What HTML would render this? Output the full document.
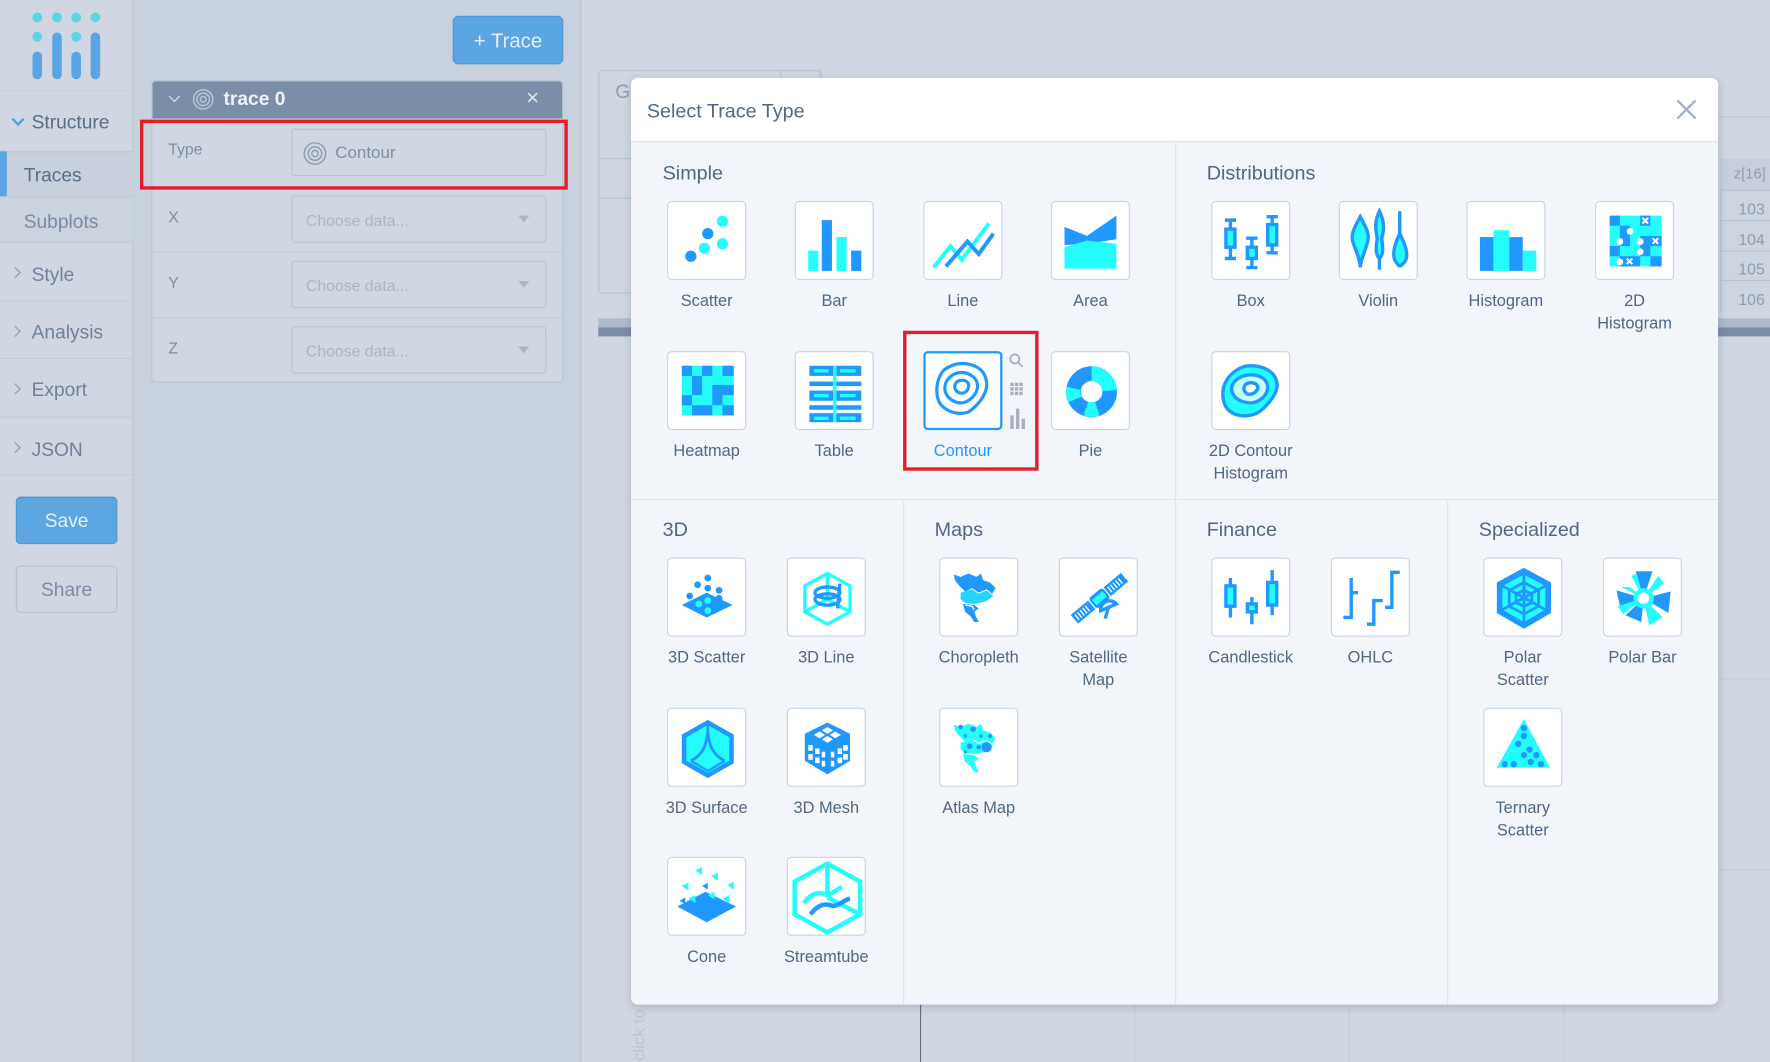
<!DOCTYPE html>
<html><head><meta charset="utf-8">
<style>
*{box-sizing:border-box;margin:0;padding:0}
html,body{width:1770px;height:1062px;overflow:hidden;background:#d0d7e2;font-family:"Liberation Sans",sans-serif}
#w{position:absolute;left:0;top:0;width:1568px;height:941px;transform:scale(1.12883);transform-origin:0 0;background:#d0d7e2}
.a{position:absolute}
.sb{left:0;top:0;width:118px;height:941px;background:#d0d7e2;border-right:1px solid #bcc6d4}
.nav{position:absolute;left:0;width:118px;border-bottom:1px solid #c2cbd8;color:#6f819b;font-size:17px}
.nav span{position:absolute;left:28px}
.chev{position:absolute;left:13px;width:7px;height:7px;border-right:1.5px solid #8a9ab0;border-top:1.5px solid #8a9ab0;transform:rotate(45deg)}
.pc{left:118px;top:0;width:397px;height:941px;background:#c8d1de;border-right:1px solid #b9c4d2}
.lbl{position:absolute;left:149px;font-size:14px;color:#7d8ea6}
.inp{position:absolute;left:258px;width:226px;height:42px;border:1px solid #b7c3d3;border-radius:3px;background:#d0d7e2;font-size:14px;color:#a9b6c8;padding-left:12px;line-height:42px}
.inp .tri{position:absolute;right:14px;top:17px;border-left:5px solid transparent;border-right:5px solid transparent;border-top:6px solid #a9b6c8}
.modal{left:559px;top:69px;width:963px;height:821px;background:#f2f5fa;border-radius:6px;overflow:hidden;box-shadow:0 2px 8px rgba(60,70,90,.25)}
.mh{position:absolute;left:0;top:0;width:963px;height:57px;background:#fff;border-bottom:1px solid #dde4ee}
.sec{position:absolute;font-size:17.5px;color:#506784;margin-top:2px}
.vl{position:absolute;width:1px;background:#e0e6ef}
.hl{position:absolute;height:1px;background:#e0e6ef}
.t{position:absolute;width:70px;height:70px;background:#fff;border:1px solid #c8d4e3;border-radius:4px}
.t svg{position:absolute;left:0;top:0}
.tl{position:absolute;width:130px;margin-left:-30px;margin-top:2px;text-align:center;font-size:14.5px;line-height:20px;color:#506784}
</style></head><body>
<div id="w">
<!-- background plot area -->
<div class="a" style="left:530px;top:62px;width:198px;height:198px;border:1px solid #b9c4d2;border-radius:3px"></div>
<div class="a" style="left:530px;top:140px;width:198px;height:1px;background:#b9c4d2"></div>
<div class="a" style="left:530px;top:175px;width:198px;height:1px;background:#b9c4d2"></div>
<div class="a" style="left:545px;top:72px;font-size:17px;color:#8f9db2">G</div>
<div class="a" style="left:691px;top:62px;width:36px;height:10px;border:1px solid #b9c4d2;border-radius:3px"></div>
<div class="a" style="left:530px;top:282px;width:1038px;height:8px;background:#aebacb"></div>
<div class="a" style="left:530px;top:290px;width:1038px;height:8px;background:#7a8ca6"></div>
<div class="a" style="left:1522px;top:103px;width:46px;height:1px;background:#bcc6d3"></div>
<div class="a" style="left:1524px;top:141px;width:44px;height:135px;border-left:1px solid #b9c4d2;background:#cdd5e0"></div>
<div class="a" style="left:1524px;top:141px;width:44px;height:28px;background:#c6cfdb;border-bottom:1px solid #b9c4d2"></div>
<div class="a" style="left:1536px;top:146px;font-size:13px;color:#8e9cb1">z[16]</div>
<div class="a" style="left:1540px;top:172px;font-size:14px;color:#8e9cb1;line-height:26.5px">103<br>104<br>105<br>106</div>
<div class="a" style="left:1524px;top:195px;width:44px;height:1px;background:#b9c4d2"></div>
<div class="a" style="left:1524px;top:222px;width:44px;height:1px;background:#b9c4d2"></div>
<div class="a" style="left:1524px;top:248px;width:44px;height:1px;background:#b9c4d2"></div>
<div class="a" style="left:1522px;top:601px;width:46px;height:1px;background:#c4cdd9"></div>
<div class="a" style="left:1522px;top:770px;width:46px;height:1px;background:#c4cdd9"></div>
<div class="a" style="left:815px;top:890px;width:1px;height:51px;background:#66717f"></div>
<div class="a" style="left:1005px;top:890px;width:1px;height:51px;background:#c4cdd9"></div>
<div class="a" style="left:1195px;top:890px;width:1px;height:51px;background:#c4cdd9"></div>
<div class="a" style="left:1385px;top:890px;width:1px;height:51px;background:#c4cdd9"></div>
<div class="a" style="left:558px;font-size:15px;color:#bcc6d3;transform:rotate(-90deg);transform-origin:0 0;top:940px">click to</div>

<!-- sidebar -->
<div class="a sb">
<svg class="a" style="left:24px;top:0" width="72" height="76">
<g fill="#5cd5e3"><circle cx="9" cy="15.5" r="4.4"/><circle cx="26.5" cy="15.5" r="4.4"/><circle cx="43.5" cy="15.5" r="4.4"/><circle cx="60.5" cy="15.5" r="4.4"/><circle cx="9" cy="32.5" r="4.4"/><circle cx="43.5" cy="32.5" r="4.4"/></g>
<g stroke="#5aa5e3" stroke-width="8.5" stroke-linecap="round"><line x1="9" y1="50" x2="9" y2="66"/><line x1="26.5" y1="33" x2="26.5" y2="66"/><line x1="43.5" y1="50" x2="43.5" y2="66"/><line x1="60.5" y1="33" x2="60.5" y2="66"/></g>
</svg>
<div class="a" style="left:0;top:80px;width:118px;height:1px;background:#c6cfdb"></div>
<div class="a" style="left:12px;top:102px;width:8px;height:8px;border-right:2px solid #4a9fe0;border-bottom:2px solid #4a9fe0;transform:rotate(45deg)"></div>
<div class="a" style="left:28px;top:99px;font-size:17px;color:#5a6d88">Structure</div>
<div class="a" style="left:0;top:134px;width:118px;height:40px;background:#c7d0dc;border-top:1px solid #bcc6d3"></div>
<div class="a" style="left:0;top:134px;width:6px;height:40px;background:#5aa5e3"></div>
<div class="a" style="left:21px;top:146px;font-size:17px;color:#5a6d88">Traces</div>
<div class="a" style="left:0;top:174px;width:118px;height:41px;background:#cbd3df;border-top:1px solid #c1cad6;border-bottom:1px solid #c1cad6"></div>
<div class="a" style="left:21px;top:187px;font-size:17px;color:#7a8ba3">Subplots</div>
<div class="nav" style="top:215px;height:52px"><i class="chev" style="top:23px;left:10px"></i><span style="top:19px">Style</span></div>
<div class="nav" style="top:267px;height:51px"><i class="chev" style="top:23px;left:10px"></i><span style="top:18px">Analysis</span></div>
<div class="nav" style="top:318px;height:52px"><i class="chev" style="top:23px;left:10px"></i><span style="top:18px">Export</span></div>
<div class="nav" style="top:370px;height:51px"><i class="chev" style="top:23px;left:10px"></i><span style="top:19px">JSON</span></div>
<div class="a" style="left:14px;top:440px;width:90px;height:42px;background:#5ca6e2;border:1px solid #4f97d3;border-radius:4px;color:#e4eef8;font-size:17px;text-align:center;line-height:42px">Save</div>
<div class="a" style="left:14px;top:501px;width:90px;height:42px;border:1px solid #b6c1d0;border-radius:4px;color:#7a8ba3;font-size:17px;text-align:center;line-height:42px">Share</div>
</div>

<!-- panel column -->
<div class="a pc"></div>
<div class="a" style="left:401px;top:14px;width:98px;height:43px;background:#5ba5e2;border:1px solid #4f97d3;border-radius:5px;color:#e4eef8;font-size:18px;text-align:center;line-height:43px">+ Trace</div>
<div class="a" style="left:134px;top:71px;width:365px;height:268px;border:1px solid #b9c4d3;border-radius:4px;background:#d0d7e2;overflow:hidden">
 <div class="a" style="left:0;top:0;width:365px;height:33px;background:#7a8ea8"></div>
</div>
<div class="a" style="left:151px;top:82px;width:7px;height:7px;border-right:1.5px solid #dfe5ee;border-bottom:1.5px solid #dfe5ee;transform:rotate(45deg)"></div>
<svg class="a" style="left:170px;top:78px" width="20" height="20"><g fill="none" stroke="#b9c5d6" stroke-width="1.3"><circle cx="10" cy="10" r="8.5"/><circle cx="10" cy="10" r="5.5"/><circle cx="10" cy="10" r="2.5"/></g></svg>
<div class="a" style="left:198px;top:78px;font-size:17px;color:#eef2f7;font-weight:bold">trace 0</div>
<div class="a" style="left:466px;top:79px;font-size:20px;color:#dfe5ee;line-height:16px">×</div>
<div class="a" style="left:135px;top:165px;width:363px;height:1px;background:#c2cbd8"></div>
<div class="a" style="left:135px;top:223px;width:363px;height:1px;background:#c2cbd8"></div>
<div class="a" style="left:135px;top:281px;width:363px;height:1px;background:#c2cbd8"></div>
<div class="lbl" style="top:124px">Type</div>
<div class="inp" style="top:114px;color:#7d8ea6;padding-left:38px;font-size:15px">Contour
<svg class="a" style="left:9px;top:10px" width="22" height="22"><g fill="none" stroke="#8e9db2" stroke-width="1.3"><circle cx="11" cy="11" r="9.5"/><circle cx="11" cy="11" r="6"/><circle cx="11" cy="11" r="2.8"/></g></svg></div>
<div class="lbl" style="top:184px">X</div>
<div class="inp" style="top:173px">Choose data...<i class="tri"></i></div>
<div class="lbl" style="top:242px">Y</div>
<div class="inp" style="top:231px">Choose data...<i class="tri"></i></div>
<div class="lbl" style="top:300px">Z</div>
<div class="inp" style="top:289px">Choose data...<i class="tri"></i></div>
<div class="a" style="left:124px;top:106px;width:379px;height:62px;border:3px solid #e41e26"></div>

<!-- modal -->
<div class="a modal">
<div class="mh"></div>
<div class="a" style="left:14px;top:19px;font-size:17.5px;color:#506784">Select Trace Type</div>
<svg class="a" style="left:926px;top:19px" width="18" height="18"><path d="M1 1L17 17M17 1L1 17" stroke="#a3b0c2" stroke-width="2"/></svg>
<div class="vl" style="left:482px;top:57px;height:764px"></div>
<div class="hl" style="left:0;top:373px;width:963px"></div>
<div class="vl" style="left:241px;top:373px;height:448px"></div>
<div class="vl" style="left:723px;top:373px;height:448px"></div>
<div class="sec" style="left:28px;top:72px">Simple</div>
<div class="sec" style="left:510px;top:72px">Distributions</div>
<div class="sec" style="left:28px;top:388px">3D</div>
<div class="sec" style="left:269px;top:388px">Maps</div>
<div class="sec" style="left:510px;top:388px">Finance</div>
<div class="sec" style="left:751px;top:388px">Specialized</div>
</div>

<div id="tiles">
<div class="t" style="left:591px;top:178px"><svg width="70" height="70"><circle cx="20" cy="48" r="5" fill="#1f98ff"/><circle cx="32" cy="41" r="5" fill="#25fdfd"/><circle cx="35" cy="28" r="5" fill="#1f98ff"/><circle cx="48" cy="37" r="5" fill="#25fdfd"/><circle cx="48" cy="17" r="5" fill="#25fdfd"/></svg></div>
<div class="tl" style="left:591px;top:255px">Scatter</div>
<div class="t" style="left:704px;top:178px"><svg width="70" height="70"><rect x="11" y="43" width="9" height="18" fill="#25fdfd"/><rect x="23" y="16" width="9" height="45" fill="#1f98ff"/><rect x="36" y="31" width="9" height="30" fill="#25fdfd"/><rect x="49" y="43" width="9" height="18" fill="#1f98ff"/></svg></div>
<div class="tl" style="left:704px;top:255px">Bar</div>
<div class="t" style="left:818px;top:178px"><svg width="70" height="70"><polyline points="8,58 23,39 33,51 57,19" fill="none" stroke="#25fdfd" stroke-width="3.5"/><polyline points="19,57 38,35 48,46 61,28" fill="none" stroke="#1f98ff" stroke-width="3.5"/></svg></div>
<div class="tl" style="left:818px;top:255px">Line</div>
<div class="t" style="left:931px;top:178px"><svg width="70" height="70"><polygon points="11,22 31,30 57,12 57,33 31,37 11,38" fill="#1f98ff"/><polygon points="11,40 31,34 57,37 57,59 11,59" fill="#25fdfd"/></svg></div>
<div class="tl" style="left:931px;top:255px">Area</div>
<div class="t" style="left:591px;top:311px"><svg width="70" height="70">
<rect x="12" y="12" width="46" height="44" fill="#25fdfd"/>
<g fill="#1f98ff"><rect x="12" y="12" width="9" height="9"/><rect x="30" y="12" width="9" height="9"/><rect x="48" y="12" width="10" height="9"/><rect x="21" y="21" width="9" height="8"/><rect x="21" y="29" width="9" height="9"/><rect x="39" y="29" width="19" height="9"/><rect x="12" y="38" width="9" height="9"/><rect x="39" y="38" width="9" height="9"/><rect x="21" y="47" width="18" height="9"/><rect x="48" y="47" width="10" height="9"/></g></svg></div>
<div class="tl" style="left:591px;top:388px">Heatmap</div>
<div class="t" style="left:704px;top:311px"><svg width="70" height="70"><g fill="#1f98ff"><rect x="12" y="12" width="46" height="9"/><rect x="12" y="26" width="46" height="4"/><rect x="12" y="34" width="46" height="9"/><rect x="12" y="47" width="46" height="4"/><rect x="12" y="54" width="46" height="8"/></g><g fill="#25fdfd"><rect x="16" y="15" width="13" height="3"/><rect x="39" y="15" width="14" height="3"/><rect x="16" y="37" width="13" height="3"/><rect x="39" y="37" width="14" height="3"/><rect x="16" y="57" width="13" height="3"/><rect x="39" y="57" width="14" height="3"/><rect x="33" y="12" width="3" height="50"/></g></svg></div>
<div class="tl" style="left:704px;top:388px">Table</div>
<div class="t" style="left:818px;top:311px;border:2.5px solid #1f98ff"><svg width="66" height="66" style="left:-1px;top:-1px"><g fill="none" stroke="#1f98ff" stroke-width="2.8"><path d="M33 10C44 10 54 15 55 27 56 38 46 48 39 53 30 56 20 53 14 46 9 38 10 24 17 16 22 12 28 10 33 10Z"/><path d="M33 18C40 18 47 23 47 30 47 37 40 44 33 45 25 45 18 39 18 32 18 24 25 18 33 18Z"/><path d="M32 25C36 24 40 27 39 31 38 35 35 37 31 36 28 35 26 32 27 29 28 26 30 25 32 25Z"/></g></svg></div>
<svg class="a" style="left:893px;top:312px" width="16" height="70"><g fill="none" stroke="#a3b0c2" stroke-width="1.6"><circle cx="6" cy="6" r="4"/><line x1="9" y1="9" x2="13" y2="13"/></g><g fill="#a3b0c2"><rect x="2" y="27" width="3" height="3"/><rect x="6" y="27" width="3" height="3"/><rect x="10" y="27" width="3" height="3"/><rect x="2" y="31" width="3" height="3"/><rect x="6" y="31" width="3" height="3"/><rect x="10" y="31" width="3" height="3"/><rect x="2" y="35" width="3" height="3"/><rect x="6" y="35" width="3" height="3"/><rect x="10" y="35" width="3" height="3"/><rect x="2" y="56" width="3" height="12"/><rect x="7" y="50" width="3" height="18"/><rect x="12" y="59" width="3" height="9"/></g></svg>
<div class="tl" style="left:818px;top:388px;color:#1f98ff">Contour</div>
<div class="t" style="left:931px;top:311px"><svg width="70" height="70"><g fill="none" stroke-width="13"><circle cx="35" cy="35" r="16" stroke="#1f98ff"/><path d="M35 19A16 16 0 0 1 51 34" stroke="#25fdfd"/><path d="M40 50A16 16 0 0 1 30 50" stroke="#25fdfd"/><path d="M20 42A16 16 0 0 1 19 32" stroke="#25fdfd"/></g></svg></div>
<div class="tl" style="left:931px;top:388px">Pie</div>

<div class="t" style="left:1073px;top:178px"><svg width="70" height="70"><g stroke="#1f98ff" stroke-width="3" fill="#25fdfd"><line x1="16" y1="16" x2="16" y2="50"/><line x1="11" y1="16" x2="21" y2="16"/><line x1="11" y1="50" x2="21" y2="50"/><rect x="12" y="24" width="8" height="16"/><line x1="35" y1="32" x2="35" y2="58"/><line x1="30" y1="32" x2="40" y2="32"/><line x1="30" y1="58" x2="40" y2="58"/><rect x="31" y="40" width="8" height="10"/><line x1="53" y1="13" x2="53" y2="45"/><line x1="48" y1="13" x2="58" y2="13"/><line x1="48" y1="45" x2="58" y2="45"/><rect x="49" y="20" width="8" height="18"/></g></svg></div>
<div class="tl" style="left:1073px;top:255px">Box</div>
<div class="t" style="left:1186px;top:178px"><svg width="70" height="70"><g stroke="#1f98ff" stroke-width="3" fill="#25fdfd"><path d="M18 13C12 24 9 30 12 37 15 45 18 52 18 58 18 52 22 45 24 37 27 30 24 24 18 13Z"/><path d="M35 8C30 18 32 26 33 32 32 40 31 46 35 50 39 46 38 40 37 32 39 26 40 18 35 8Z"/><line x1="35" y1="50" x2="35" y2="60"/><line x1="53" y1="8" x2="53" y2="32"/><path d="M53 28C48 38 46 46 49 52 51 56 53 56 53 58 53 56 56 56 58 52 61 46 58 38 53 28Z"/></g></svg></div>
<div class="tl" style="left:1186px;top:255px">Violin</div>
<div class="t" style="left:1299px;top:178px"><svg width="70" height="70"><rect x="11" y="31" width="12" height="30" fill="#1f98ff"/><rect x="23" y="25" width="14" height="36" fill="#25fdfd"/><rect x="37" y="31" width="12" height="30" fill="#1f98ff"/><rect x="49" y="43" width="12" height="18" fill="#25fdfd"/></svg></div>
<div class="tl" style="left:1299px;top:255px">Histogram</div>
<div class="t" style="left:1413px;top:178px"><svg width="70" height="70"><rect x="12" y="12" width="46" height="45" fill="#25fdfd"/><g fill="#1f98ff"><rect x="12" y="12" width="9" height="9"/><rect x="21" y="21" width="9" height="9"/><rect x="39" y="12" width="9" height="9"/><rect x="12" y="39" width="9" height="9"/><rect x="21" y="30" width="9" height="9"/><rect x="39" y="30" width="9" height="9"/><rect x="39" y="39" width="9" height="9"/><rect x="21" y="48" width="18" height="9"/><rect x="48" y="48" width="10" height="9"/><rect x="48" y="30" width="10" height="9"/></g><g fill="#fff"><circle cx="30" cy="26" r="3"/><circle cx="21" cy="35" r="3"/><circle cx="39" cy="35" r="3"/><circle cx="39" cy="44" r="3"/><circle cx="21" cy="53" r="3"/></g><g stroke="#fff" stroke-width="1.8"><path d="M41 14L46 19M46 14L41 19M50 32L55 37M55 32L50 37M27 50L32 55M32 50L27 55"/></g></svg></div>
<div class="tl" style="left:1413px;top:255px">2D<br>Histogram</div>
<div class="t" style="left:1073px;top:311px"><svg width="70" height="70"><path d="M34 12C45 12 55 17 57 26 59 34 53 42 45 50 38 57 26 58 18 54 10 50 8 40 10 31 13 20 24 12 34 12Z" fill="#25fdfd" stroke="#1f98ff" stroke-width="3"/><path d="M34 20C42 20 49 24 49 31 49 38 42 44 35 45 26 45 18 41 17 33 17 25 26 20 34 20Z" fill="#c5fdfd" stroke="#1f98ff" stroke-width="3"/><path d="M34 27C38 27 41 29 40 33 38 36 35 38 31 37 28 35 27 32 29 29 31 27 33 27 34 27Z" fill="#fff" stroke="#1f98ff" stroke-width="3"/></svg></div>
<div class="tl" style="left:1073px;top:388px">2D Contour<br>Histogram</div>

<div class="t" style="left:591px;top:494px"><svg width="70" height="70"><polygon points="12,41 34,30 57,41 34,52" fill="#1f98ff"/><g fill="#1f98ff"><circle cx="35" cy="17" r="3"/><circle cx="26" cy="23" r="3"/><circle cx="35" cy="26" r="3"/><circle cx="45" cy="28" r="3"/><circle cx="19" cy="33" r="3"/><circle cx="45" cy="35" r="3"/></g><g fill="#25fdfd"><circle cx="27" cy="40" r="3"/><circle cx="35" cy="37" r="3"/><circle cx="35" cy="46" r="3"/></g></svg></div>
<div class="tl" style="left:591px;top:571px">3D Scatter</div>
<div class="t" style="left:697px;top:494px"><svg width="70" height="70"><g fill="none" stroke="#25fdfd" stroke-width="3"><polygon points="35,13 55,24 55,47 35,58 15,47 15,24"/><line x1="35" y1="13" x2="35" y2="36"/><line x1="35" y1="36" x2="15" y2="47"/><line x1="35" y1="36" x2="55" y2="47"/></g><g fill="none" stroke="#1f98ff" stroke-width="3"><ellipse cx="35" cy="30" rx="11" ry="5"/><ellipse cx="35" cy="36" rx="11" ry="5"/><line x1="46" y1="22" x2="44" y2="44"/></g></svg></div>
<div class="tl" style="left:697px;top:571px">3D Line</div>
<div class="t" style="left:591px;top:627px"><svg width="70" height="70"><polygon points="35,12 56,24 56,47 35,59 14,47 14,24" fill="#25fdfd" stroke="#1f98ff" stroke-width="4"/><path d="M35 20C36 30 38 40 50 46M35 20C34 30 32 40 20 46M35 12V22" fill="none" stroke="#1f98ff" stroke-width="2.5"/><path d="M20 46L35 55 50 46" fill="none" stroke="#1f98ff" stroke-width="2"/></svg></div>
<div class="tl" style="left:591px;top:704px">3D Surface</div>
<div class="t" style="left:697px;top:627px"><svg width="70" height="70"><polygon points="35,12 55,22 55,46 35,58 15,46 15,22" fill="#1f98ff"/><g fill="#fff"><polygon points="35,16 40,19 35,22 30,19"/><polygon points="28,20 33,23 28,26 23,23"/><polygon points="42,20 47,23 42,26 37,23"/><polygon points="35,24 40,27 35,30 30,27"/><rect x="18" y="32" width="4" height="5"/><rect x="24" y="35" width="4" height="5"/><rect x="30" y="38" width="3" height="5"/><rect x="18" y="40" width="4" height="5"/><rect x="24" y="43" width="4" height="5"/><rect x="30" y="46" width="3" height="5"/><rect x="38" y="38" width="3" height="5"/><rect x="44" y="35" width="4" height="5"/><rect x="49" y="32" width="4" height="5"/><rect x="38" y="46" width="3" height="5"/><rect x="44" y="43" width="4" height="5"/><rect x="49" y="40" width="4" height="5"/></g></svg></div>
<div class="tl" style="left:697px;top:704px">3D Mesh</div>
<div class="t" style="left:591px;top:759px"><svg width="70" height="70"><polygon points="8,43 33,30 60,43 34,57" fill="#1f98ff"/><g fill="#25fdfd"><path d="M24 11l6 -3 0 7z"/><path d="M38 16l6 -3 0 7z"/><path d="M12 25l6 -3 0 7z"/><path d="M52 24l6 -3 0 7z"/><path d="M18 36l6 -3 0 7z"/><path d="M35 33l6 -3 0 7z"/><path d="M48 36l6 -3 0 7z"/></g><g fill="#1f98ff"><path d="M30 25l5 -3 0 6z"/><path d="M10 38l5 -3 0 6z"/></g></svg></div>
<div class="tl" style="left:591px;top:836px">Cone</div>
<div class="t" style="left:697px;top:759px"><svg width="70" height="70"><g fill="none" stroke="#25fdfd" stroke-width="4"><polygon points="35,5 64,21 64,50 35,66 6,50 6,21"/><line x1="35" y1="5" x2="35" y2="35"/><line x1="35" y1="35" x2="64" y2="50"/><path d="M14 40C20 32 26 30 32 32 38 34 42 28 48 26"/></g><path d="M20 50C26 42 32 40 38 42 44 44 48 38 55 36" fill="none" stroke="#1f98ff" stroke-width="4"/></svg></div>
<div class="tl" style="left:697px;top:836px">Streamtube</div>

<div class="t" style="left:832px;top:494px"><svg width="70" height="70"><path d="M12 14L18 16 25 13 32 16 36 13 38 19 44 21 49 26 46 31 41 27 34 30 28 26 22 29 16 23 13 19Z" fill="#1f98ff"/><path d="M18 30L28 27 34 31 41 28 47 33 40 38 30 40 22 39 18 36Z" fill="#25d5fd"/><path d="M20 40L30 41 34 44 30 47 32 52 34 56 30 56 27 51 22 47Z" fill="#1f98ff"/><path d="M22 41L28 42 30 45" fill="none" stroke="#fff" stroke-width="1.2"/></svg></div>
<div class="tl" style="left:832px;top:571px">Choropleth</div>
<div class="t" style="left:938px;top:494px"><svg width="70" height="70"><g transform="rotate(-40 35 35)"><rect x="6" y="30" width="20" height="10" fill="#1f98ff"/><rect x="44" y="30" width="20" height="10" fill="#1f98ff"/><g stroke="#fff" stroke-width="1.2"><path d="M9 32v6M12 32v6M15 32v6M18 32v6M21 32v6M47 32v6M50 32v6M53 32v6M56 32v6M59 32v6"/></g><rect x="27" y="29" width="16" height="12" rx="3" fill="#1f98ff"/><rect x="29" y="32" width="12" height="6" fill="#25fdfd"/></g><path d="M36 46A8 8 0 0 1 50 40Z" fill="#fff" stroke="#1f98ff" stroke-width="3"/><line x1="43" y1="43" x2="40" y2="53" stroke="#1f98ff" stroke-width="3"/></svg></div>
<div class="tl" style="left:938px;top:571px">Satellite<br>Map</div>
<div class="t" style="left:832px;top:627px"><svg width="70" height="70"><path d="M12 14L18 16 25 13 32 16 36 13 38 19 44 21 49 26 46 31 41 27 34 30 28 26 22 29 16 23 13 19Z" fill="#25fdfd"/><path d="M18 30L28 27 34 31 41 28 47 33 40 38 30 40 22 39 18 36Z" fill="#25fdfd"/><path d="M20 40L30 41 34 44 30 47 32 52 34 56 30 56 27 51 22 47Z" fill="#25fdfd"/><g fill="#1f98ff"><circle cx="18" cy="16" r="2"/><circle cx="29" cy="18" r="2.5"/><circle cx="22" cy="24" r="1.5"/><circle cx="26" cy="33" r="2.5"/><circle cx="34" cy="34" r="2"/><circle cx="41" cy="34" r="4.5"/><circle cx="44" cy="24" r="1.8"/><circle cx="36" cy="24" r="1.5"/><circle cx="22" cy="38" r="1.5"/></g></svg></div>
<div class="tl" style="left:832px;top:704px">Atlas Map</div>

<div class="t" style="left:1073px;top:494px"><svg width="70" height="70"><g stroke="#1f98ff" stroke-width="3" fill="#25fdfd"><line x1="16" y1="17" x2="16" y2="52"/><rect x="12" y="24" width="8" height="18"/><line x1="35" y1="34" x2="35" y2="58"/><rect x="31" y="40" width="8" height="7"/><line x1="53" y1="10" x2="53" y2="50"/><rect x="49" y="21" width="8" height="20"/></g></svg></div>
<div class="tl" style="left:1073px;top:571px">Candlestick</div>
<div class="t" style="left:1179px;top:494px"><svg width="70" height="70"><g stroke="#1f98ff" stroke-width="3" fill="none"><path d="M17 17V52H10M17 30H23"/><path d="M31 58H37V37H45"/><path d="M47 43H53V12H60"/></g></svg></div>
<div class="tl" style="left:1179px;top:571px">OHLC</div>

<div class="t" style="left:1314px;top:494px"><svg width="70" height="70"><polygon points="35,8 59,21 59,48 35,62 11,48 11,21" fill="#1f98ff"/><polygon points="35,14 54,24 54,45 35,56 16,45 16,24" fill="#25fdfd"/><g fill="none" stroke="#1f98ff" stroke-width="2.5"><polygon points="35,21 48,28 48,42 35,49 22,42 22,28"/><polygon points="35,28 42,31 42,39 35,42 28,39 28,31"/><path d="M35 14V56M16 24L54 45M54 24L16 45"/></g></svg></div>
<div class="tl" style="left:1314px;top:571px">Polar<br>Scatter</div>
<div class="t" style="left:1420px;top:494px"><svg width="70" height="70"><g fill="#1f98ff"><path d="M35 35L28 11 43 11Z"/><path d="M35 35L59 29 57 48Z"/><path d="M35 35L33 56 19 50Z"/><path d="M35 35L11 28 15 46Z"/></g><g fill="#25fdfd"><path d="M35 35L24 15 29 13Z"/><path d="M35 35L48 15 53 22Z"/><path d="M35 35L52 52 40 59Z"/><path d="M35 35L17 49 12 42Z"/><path d="M35 35L23 25 15 25Z"/></g><circle cx="35" cy="35" r="9" fill="#25fdfd"/><circle cx="35" cy="35" r="5" fill="#fff"/></svg></div>
<div class="tl" style="left:1420px;top:571px">Polar Bar</div>
<div class="t" style="left:1314px;top:627px"><svg width="70" height="70"><polygon points="35,9 58,52 11,52" fill="#25fdfd"/><g fill="#1f98ff"><circle cx="35" cy="17" r="2.8"/><circle cx="35" cy="24" r="2.8"/><circle cx="30" cy="31" r="2.8"/><circle cx="40" cy="36" r="2.8"/><circle cx="35" cy="41" r="2.8"/><circle cx="46" cy="41" r="2.8"/><circle cx="41" cy="47" r="2.8"/><circle cx="18" cy="49" r="2.8"/><circle cx="26" cy="49" r="2.8"/><circle cx="50" cy="49" r="2.8"/></g></svg></div>
<div class="tl" style="left:1314px;top:704px">Ternary<br>Scatter</div>
</div>

<div class="a" style="left:800px;top:293px;width:120px;height:124px;border:3px solid #e41e26"></div>
</div>
</body></html>
